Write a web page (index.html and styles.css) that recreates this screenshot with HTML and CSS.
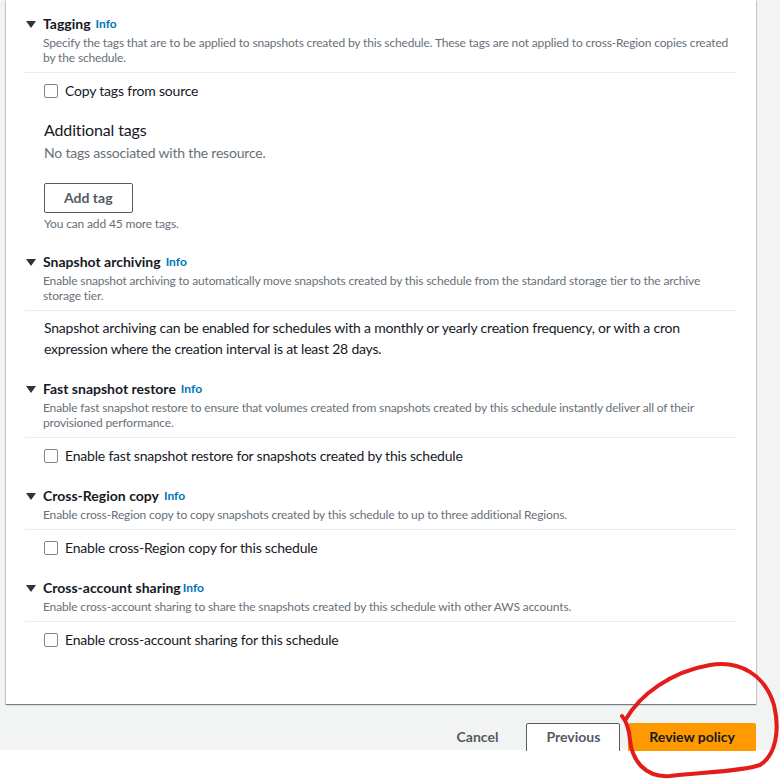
FILE: index.html
```html
<!DOCTYPE html>
<html lang="en">
<head>
<meta charset="utf-8">
<title>Create lifecycle policy</title>
<link rel="stylesheet" href="styles.css">
</head>
<body>
<div class="page">
  <div class="card">
    <section class="section first">
      <div class="head">
        <h3 class="title"><svg class="caret" width="10" height="7" viewBox="0 0 10 7"><polygon points="0,0 10,0 5,7"/></svg>Tagging<a class="info">Info</a></h3>
        <p class="desc">Specify the tags that are to be applied to snapshots created by this schedule. These tags are not applied to cross-Region copies created by the schedule.</p>
      </div>
      <div class="body">
        <label class="check"><span class="box"></span>Copy tags from source</label>
        <h4 class="subhead">Additional tags</h4>
        <p class="empty">No tags associated with the resource.</p>
        <button class="btn normal add">Add tag</button>
        <p class="hint">You can add 45 more tags.</p>
      </div>
    </section>

    <section class="section">
      <div class="head">
        <h3 class="title"><svg class="caret" width="10" height="7" viewBox="0 0 10 7"><polygon points="0,0 10,0 5,7"/></svg>Snapshot archiving<a class="info">Info</a></h3>
        <p class="desc">Enable snapshot archiving to automatically move snapshots created by this schedule from the standard storage tier to the archive storage tier.</p>
      </div>
      <div class="body text">
        <p class="para">Snapshot archiving can be enabled for schedules with a monthly or yearly creation frequency, or with a cron expression where the creation interval is at least 28 days.</p>
      </div>
    </section>

    <section class="section">
      <div class="head">
        <h3 class="title"><svg class="caret" width="10" height="7" viewBox="0 0 10 7"><polygon points="0,0 10,0 5,7"/></svg>Fast snapshot restore<a class="info">Info</a></h3>
        <p class="desc">Enable fast snapshot restore to ensure that volumes created from snapshots created by this schedule instantly deliver all of their provisioned performance.</p>
      </div>
      <div class="body">
        <label class="check"><span class="box"></span>Enable fast snapshot restore for snapshots created by this schedule</label>
      </div>
    </section>

    <section class="section">
      <div class="head">
        <h3 class="title"><svg class="caret" width="10" height="7" viewBox="0 0 10 7"><polygon points="0,0 10,0 5,7"/></svg>Cross-Region copy<a class="info">Info</a></h3>
        <p class="desc">Enable cross-Region copy to copy snapshots created by this schedule to up to three additional Regions.</p>
      </div>
      <div class="body">
        <label class="check"><span class="box"></span>Enable cross-Region copy for this schedule</label>
      </div>
    </section>

    <section class="section">
      <div class="head">
        <h3 class="title"><svg class="caret" width="10" height="7" viewBox="0 0 10 7"><polygon points="0,0 10,0 5,7"/></svg>Cross-account sharing<a class="info tight">Info</a></h3>
        <p class="desc">Enable cross-account sharing to share the snapshots created by this schedule with other AWS accounts.</p>
      </div>
      <div class="body">
        <label class="check"><span class="box"></span>Enable cross-account sharing for this schedule</label>
      </div>
    </section>
  </div>

  <div class="footer">
    <button class="btn link">Cancel</button>
    <button class="btn normal">Previous</button>
    <button class="btn primary">Review policy</button>
  </div>
</div>

<svg class="annotation" width="180" height="130" viewBox="600 650 180 130">
  <path d="M 626 719 C 640 695, 670 672, 710 665 C 740 660, 765 675, 774 705 C 780 730, 776 755, 760 765 C 740 772, 700 772, 670 776 C 645 778, 632 760, 630 740 C 629 728, 627 722, 622 716" />
</svg>
</body>
</html>
```

FILE: styles.css
```css
* {
  box-sizing: border-box;
}

html, body {
  margin: 0;
  padding: 0;
  background: #ffffff;
}

body {
  position: relative;
  width: 780px;
  height: 780px;
  font-family: Lato, "Liberation Sans", sans-serif;
  color: #16191f;
}

.page {
  width: 780px;
  height: 750px;
  background: #f2f3f3;
  padding-left: 6px;
}

.card {
  width: 750px;
  background: #ffffff;
  padding: 14px 19px 54px;
  box-shadow: 0 1px 1px 0 rgba(0, 28, 36, 0.35), 1px 1px 1px 0 rgba(0, 28, 36, 0.15), -1px 1px 1px 0 rgba(0, 28, 36, 0.15);
}

.section + .section {
  margin-top: 20px;
}

.head {
  border-bottom: 1px solid #eaeded;
  padding-bottom: 7px;
}

.title {
  display: flex;
  align-items: center;
  margin: 0;
  font-size: 14px;
  line-height: 20px;
  font-weight: 700;
  color: #16191f;
}

.caret {
  margin-left: 1px;
  margin-right: 7px;
  fill: #2f343a;
}

.info {
  margin-left: 5px;
  font-size: 12px;
  font-weight: 700;
  color: #0073bb;
}

.info.tight {
  margin-left: 2px;
}

.desc {
  margin: 1px 0 0 18px;
  font-size: 12px;
  line-height: 15px;
  letter-spacing: -0.15px;
  color: #687078;
}

.body {
  padding: 8px 0 0 19px;
}

.body.text {
  padding-top: 6px;
}

.check {
  display: flex;
  align-items: center;
  font-size: 14px;
  line-height: 20px;
  letter-spacing: -0.2px;
  color: #16191f;
}

.box {
  width: 14px;
  height: 14px;
  margin-right: 7px;
  border: 1px solid #7d8690;
  border-radius: 2px;
  background: #ffffff;
}

.subhead {
  margin: 18px 0 0;
  font-size: 16px;
  line-height: 22px;
  font-weight: 400;
  letter-spacing: -0.15px;
  color: #16191f;
}

.empty {
  margin: 2px 0 0;
  font-size: 14px;
  line-height: 20px;
  letter-spacing: -0.2px;
  color: #687078;
}

.hint {
  margin: 3px 0 0;
  font-size: 12px;
  line-height: 16px;
  letter-spacing: -0.15px;
  color: #687078;
}

.para {
  margin: 0;
  font-size: 14px;
  line-height: 21px;
  letter-spacing: -0.2px;
  color: #16191f;
}

.btn {
  font-family: inherit;
  font-size: 14px;
  line-height: 20px;
  font-weight: 700;
  height: 32px;
  padding: 2px 19px 6px;
  border-radius: 2px;
  cursor: pointer;
}

.btn.normal {
  background: #ffffff;
  border: 1px solid #545b64;
  color: #545b64;
}

.btn.add {
  margin-top: 20px;
  height: 30px;
  padding: 3px 19px;
}

.btn.link {
  background: transparent;
  border: 1px solid transparent;
  color: #545b64;
}

.btn.primary {
  background: #ff9900;
  border: 1px solid #ff9900;
  color: #16191f;
  padding-left: 20px;
  padding-right: 20px;
}

.footer {
  width: 750px;
  height: 28px;
  margin-top: 19px;
  display: flex;
  justify-content: flex-end;
  align-items: flex-start;
  gap: 8px;
  overflow: hidden;
}

.annotation {
  position: absolute;
  left: 600px;
  top: 650px;
  z-index: 10;
  overflow: visible;
  pointer-events: none;
}

.annotation path {
  fill: none;
  stroke: #e31c1c;
  stroke-width: 4;
  stroke-linecap: round;
  stroke-linejoin: round;
}
```
